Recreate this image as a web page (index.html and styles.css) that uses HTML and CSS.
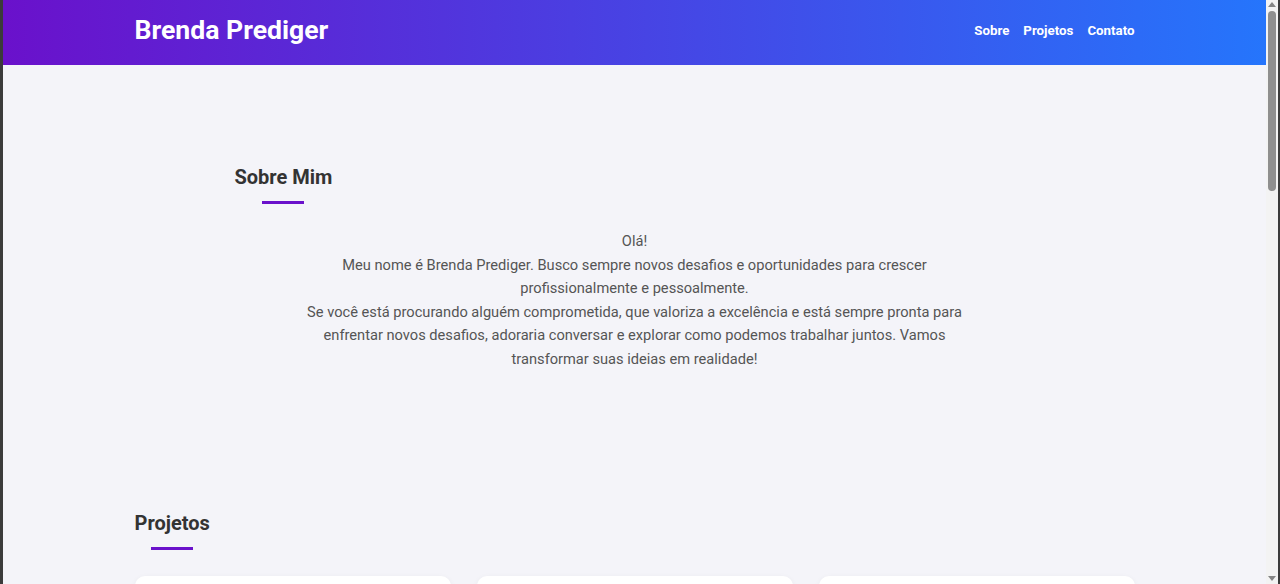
FILE: index.html
```html
<!DOCTYPE html>
<html lang="pt-BR">
<head>
<meta charset="utf-8">
<title>Brenda Prediger</title>
<link rel="stylesheet" href="styles.css">
</head>
<body>
<div class="frame">
  <div class="page">
    <header class="site-header">
      <div class="container header-inner">
        <h1 class="logo">Brenda Prediger</h1>
        <nav class="nav">
          <a href="#sobre">Sobre</a>
          <a href="#projetos">Projetos</a>
          <a href="#contato">Contato</a>
        </nav>
      </div>
    </header>
    <main>
      <section class="about" id="sobre">
        <div class="about-inner">
          <h2 class="section-title">Sobre Mim</h2>
          <p class="about-text">Olá!<br>Meu nome é Brenda Prediger. Busco sempre novos desafios e oportunidades para crescer profissionalmente e pessoalmente.<br>Se você está procurando alguém comprometida, que valoriza a excelência e está sempre pronta para enfrentar novos desafios, adoraria conversar e explorar como podemos trabalhar juntos. Vamos transformar suas ideias em realidade!</p>
        </div>
      </section>
      <section class="projects" id="projetos">
        <div class="container">
          <h2 class="section-title">Projetos</h2>
          <div class="cards">
            <div class="card"></div>
            <div class="card"></div>
            <div class="card"></div>
          </div>
        </div>
      </section>
    </main>
  </div>
  <div class="scrollbar">
    <span class="arrow up"></span>
    <span class="thumb"></span>
    <span class="track-fill"></span>
    <span class="arrow down"></span>
  </div>
</div>
</body>
</html>
```

FILE: styles.css
```css
* { box-sizing: border-box; }
html, body {
  margin: 0;
  padding: 0;
  height: 100%;
  overflow: hidden;
}
body {
  font-family: Roboto, "Liberation Sans", Arial, sans-serif;
  background: #3b3b3b;
}
.frame {
  display: flex;
  height: 584px;
  padding-left: 3px;
  padding-right: 2px;
  background: #3b3b3b;
}
.page {
  flex: 1;
  overflow: hidden;
  background: #f4f4f9;
}
.scrollbar {
  width: 12px;
  background: #f3f3f3;
  display: flex;
  flex-direction: column;
  align-items: center;
}
.arrow {
  width: 0;
  height: 0;
  border-left: 4px solid transparent;
  border-right: 4px solid transparent;
  flex: none;
}
.arrow.up {
  border-bottom: 5px solid #858585;
  margin-top: 2px;
}
.arrow.down {
  border-top: 5px solid #858585;
  margin-bottom: 3px;
}
.thumb {
  width: 8px;
  height: 180px;
  margin-top: 4px;
  border-radius: 4px;
  background: #8f8f8f;
  flex: none;
}
.track-fill { flex: 1; }

.container {
  width: 1000px;
  margin: 0 auto;
}
.site-header {
  height: 65px;
  background: linear-gradient(to right, #6a11cb, #2575fc);
  color: #fff;
}
.header-inner {
  height: 100%;
  padding-bottom: 5px;
  display: flex;
  align-items: center;
  justify-content: space-between;
}
.logo {
  margin: 0;
  font-size: 26.6px;
  font-weight: 700;
  line-height: 1;
}
.nav {
  display: flex;
  gap: 14px;
}
.nav a {
  color: #fff;
  text-decoration: none;
  font-weight: 700;
  font-size: 13.3px;
}

.section-title {
  display: inline-block;
  margin: 0;
  font-size: 20px;
  line-height: 24px;
  font-weight: 700;
  color: #333;
}
.section-title::after {
  content: "";
  display: block;
  width: 42px;
  height: 3px;
  background: #6a11cb;
  margin: 12px auto 0;
}

.about {
  padding: 100px 0 0;
}
.about-inner {
  width: 800px;
  margin: 0 auto;
}
.about-text {
  margin: 26px auto 0;
  max-width: 670px;
  text-align: center;
  color: #555;
  font-size: 14.65px;
  line-height: 23.5px;
}

.projects {
  padding-top: 140px;
}
.cards {
  margin-top: 26px;
  display: grid;
  grid-template-columns: repeat(3, 1fr);
  gap: 26px;
}
.card {
  height: 240px;
  background: #fff;
  border-radius: 10px;
  box-shadow: 0 2px 6px rgba(0,0,0,0.06);
}
```
